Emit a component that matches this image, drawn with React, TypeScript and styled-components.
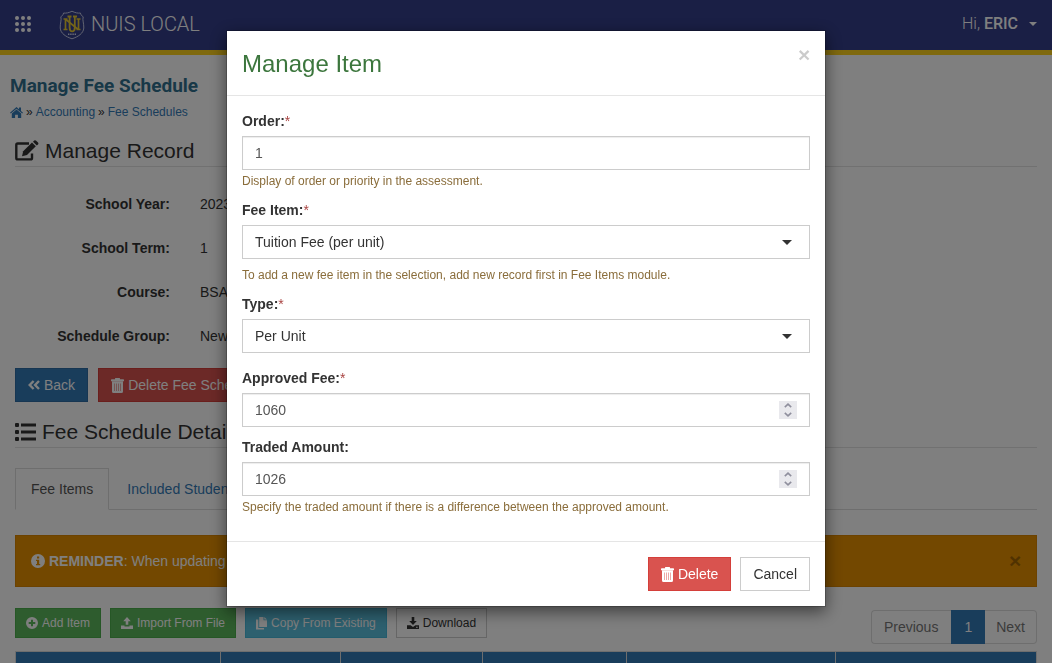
import React from "react";
import styled, { createGlobalStyle, css } from "styled-components";

const GlobalStyle = createGlobalStyle`
  *, *::before, *::after { box-sizing: border-box; }
  body {
    margin: 0;
    overflow: hidden;
    background: #fff;
    color: #333;
    font-family: "Liberation Sans", Arial, sans-serif;
    font-size: 14px;
    line-height: 20px;
  }
  button, input, select { font-family: inherit; }
  h1, h2, h3, p, ul, dl, dd { margin: 0; padding: 0; }
  a { color: #337ab7; text-decoration: none; }
  svg { display: block; flex: none; }
`;

/* ---------- icons ---------- */

type IconProps = { size?: number };

const GridIcon = () => (
  <svg width="16" height="16" viewBox="0 0 16 16" fill="currentColor" aria-hidden="true">
    {[2, 8, 14].map((y) => [2, 8, 14].map((x) => <circle key={`${x}-${y}`} cx={x} cy={y} r="2" />))}
  </svg>
);

const Crest = () => (
  <svg width="26" height="32" viewBox="0 -2 26 32" fill="none" aria-hidden="true">
    <path
      d="M13 1.200 C10 2.800 7 3.400 4.600 3 C4.200 4.800 3.200 6 1.800 6.800 C2.800 10 1 13.500 1.200 18 C1.600 23.500 7 26.800 13 28.800 C19 26.800 24.400 23.500 24.800 18 C25 13.500 23.200 10 24.200 6.800 C22.800 6 21.800 4.800 21.400 3 C19 3.400 16 2.800 13 1.200Z"
      stroke="#c5c9e4"
      strokeWidth="1"
    />
    <path d="M4.500 9h4M4.500 19.500h4M6.500 9v10.500M7 9.500L18.500 19M17.500 9h4M19.500 9v10.500M17.500 19.500h4" stroke="#e6c832" strokeWidth="1.700" />
    <path d="M8.500 6.500h4M14 6.500h4M10.600 6.500v11q0 3.800 2.600 3.800t2.600-3.800v-11" stroke="#e6c832" strokeWidth="1.800" />
    <path d="M9 24.300h8" stroke="#d5d8ee" strokeWidth="1.400" strokeDasharray="1.400 0.800" />
  </svg>
);

const HomeIcon = () => (
  <svg width="13" height="11" viewBox="0 0 13 11" fill="currentColor" aria-hidden="true">
    <path d="M6.500 0L9 2.200V.6h2v3.300l2 1.800-.8.9L6.500 1.700.8 6.600 0 5.700z" />
    <path d="M6.500 2.400L11.200 6.400V11H7.900V7.700H5.100V11H1.800V6.400z" />
  </svg>
);

const EditIcon = () => (
  <svg width="24" height="21" viewBox="0 0 24 21" aria-hidden="true">
    <path d="M14 3.500H2.700Q1.300 3.500 1.300 4.900V18Q1.300 19.400 2.700 19.400H15.600Q17 19.400 17 18V13.500" fill="none" stroke="currentColor" strokeWidth="2.400" />
    <path d="M7 16.200L8.200 11.200 17 2.600 20.800 6.300 12 15z" fill="currentColor" />
    <path d="M18 1.700L19.200.6Q20.200-.2 21.200.7L23 2.500Q23.800 3.500 23 4.400L21.800 5.400z" fill="currentColor" />
  </svg>
);

const ListIcon = () => (
  <svg width="21" height="18" viewBox="0 0 21 18" fill="currentColor" aria-hidden="true">
    {[0, 7, 14].map((y) => (
      <g key={y}>
        <rect x="0" y={y} width="4" height="4" rx="1" />
        <rect x="6" y={y + 0.5} width="15" height="3" />
      </g>
    ))}
  </svg>
);

const BackIcon = () => (
  <svg width="12" height="10" viewBox="0 0 12 10" fill="none" stroke="currentColor" strokeWidth="2.400" aria-hidden="true">
    <path d="M5.600 1L1.700 5l3.900 4M11 1L7.100 5 11 9" />
  </svg>
);

const TrashIcon = () => (
  <svg width="13" height="15" viewBox="0 0 13 15" aria-hidden="true">
    <path d="M4 1.300V.6Q4 0 4.600 0H8.400Q9 0 9 .6V1.300H12.300Q13 1.300 13 2V3.300H0V2Q0 1.300.7 1.300z" fill="currentColor" />
    <path
      fillRule="evenodd"
      d="M1 3.300H12V13.500Q12 15 10.500 15H2.500Q1 15 1 13.500zM3.400 5.500V13H3.900V5.500zM5.400 5.500V13H5.900V5.500zM7.300 5.500V13H7.800V5.500zM9.200 5.500V13H9.700V5.500z"
      fill="currentColor"
    />
  </svg>
);

const InfoIcon = () => (
  <svg width="14" height="14" viewBox="0 0 14 14" aria-hidden="true">
    <path
      fillRule="evenodd"
      fill="currentColor"
      d="M7 0a7 7 0 1 1 0 14A7 7 0 0 1 7 0zM6 2.500V4.500H8.200V2.500zM5 5.700V7H6V10H5V11.300H9.200V10H8.200V5.700z"
    />
  </svg>
);

const PlusIcon = () => (
  <svg width="12" height="12" viewBox="0 0 12 12" aria-hidden="true">
    <path
      fillRule="evenodd"
      fill="currentColor"
      d="M6 0a6 6 0 1 1 0 12A6 6 0 0 1 6 0zM5 2.700V5H2.700V7H5V9.300H7V7H9.300V5H7V2.700z"
    />
  </svg>
);

const UploadIcon = () => (
  <svg width="12" height="12" viewBox="0 0 12 12" fill="currentColor" aria-hidden="true">
    <path d="M6 0L9.800 4.200H7.300V7.800H4.700V4.200H2.200z" />
    <path d="M0 8.500H3.500V9.500H8.500V8.500H12V12H0z" />
  </svg>
);

const DownloadIcon = () => (
  <svg width="12" height="12" viewBox="0 0 12 12" aria-hidden="true">
    <path d="M4.700 0H7.300V4H9.800L6 8 2.200 4H4.700z" fill="currentColor" />
    <path fillRule="evenodd" d="M0 8.200H3.600L6 10 8.400 8.200H12V12H0zM9 9.700V10.700H10.700V9.700z" fill="currentColor" />
  </svg>
);

const CopyIcon = () => (
  <svg width="11" height="13" viewBox="0 0 11 13" fill="currentColor" aria-hidden="true">
    <path d="M3.200 0H7.500V3.300H11V10H3.200z" />
    <path d="M8.300 0L11 2.600H8.300z" />
    <path d="M0 2.500H2.300V11H8V12.500H0z" />
  </svg>
);

const Caret = ({ size = 8 }: IconProps) => (
  <svg width={size} height={size / 2} viewBox="0 0 8 4" fill="currentColor" aria-hidden="true">
    <path d="M0 0H8L4 4z" />
  </svg>
);

const Chevron = ({ up }: { up?: boolean }) => (
  <svg width="8" height="5" viewBox="0 0 8 5" fill="none" stroke="#8f8f9d" strokeWidth="1.600" aria-hidden="true">
    <path d={up ? "M.8 4.200L4 1.200 7.200 4.200" : "M.8 .8L4 3.800 7.200 .8"} />
  </svg>
);

/* ---------- page ---------- */

const TopBar = styled.header`
  display: flex;
  align-items: center;
  height: 55px;
  padding: 0 15px 3px;
  border-bottom: 5px solid #ffd21c;
  background: #343e8a;
  color: #fff;
  font-family: Roboto, sans-serif;
`;

const IconButton = styled.button`
  padding: 0;
  border: 0;
  background: none;
  color: inherit;
`;

const Brand = styled.a`
  display: flex;
  align-items: center;
  gap: 6px;
  margin-left: 28px;
  color: #fff;
  font-size: 20px;
  font-weight: 300;
`;

const UserMenu = styled.button`
  display: flex;
  align-items: center;
  gap: 11px;
  margin-left: auto;
  padding: 0;
  border: 0;
  background: none;
  color: #fff;
  font-size: 16px;
  font-weight: 300;
  b { font-weight: 500; }
`;

const PageHeader = styled.div`
  padding: 21px 10px 0;
`;

const PageTitle = styled.h1`
  color: #31708f;
  font-family: Roboto, sans-serif;
  font-size: 19px;
  font-weight: 700;
  line-height: 20px;
`;

const Breadcrumb = styled.nav`
  display: flex;
  align-items: center;
  gap: 3px;
  margin-top: 6px;
  font-size: 12px;
`;

const Main = styled.main`
  padding: 0 15px;
`;

const SectionTitle = styled.h2`
  display: flex;
  align-items: center;
  gap: 6px;
  height: 31px;
  margin-top: 14px;
  padding-bottom: 1px;
  border-bottom: 1px solid #e2e2e2;
  font-size: 21px;
  font-weight: 400;
  & ~ & { margin-top: 15px; }
`;

const Record = styled.dl`
  display: grid;
  grid-template-columns: 155px 1fr;
  gap: 24px 30px;
  padding: 27px 0 22px;
`;

const Term = styled.dt`
  font-weight: 700;
  text-align: right;
`;

const ButtonRow = styled.div<{ $gap: number }>`
  display: flex;
  gap: ${(p) => p.$gap}px;
`;

const tones = {
  primary: css`background: #337ab7; border-color: #2e6da4; color: #fff;`,
  danger: css`background: #d9534f; border-color: #d43f3a; color: #fff;`,
  success: css`background: #5cb85c; border-color: #4cae4c; color: #fff;`,
  info: css`background: #5bc0de; border-color: #46b8da; color: #fff;`,
  plain: css`background: #fff; border-color: #ccc; color: #333;`,
};

const Button = styled.button<{ $tone: keyof typeof tones; $small?: boolean }>`
  display: inline-flex;
  align-items: center;
  gap: 4px;
  height: ${(p) => (p.$small ? 30 : 34)}px;
  padding: 0 ${(p) => (p.$small ? 10 : 12)}px;
  border: 1px solid;
  font-size: ${(p) => (p.$small ? 12 : 14)}px;
  white-space: nowrap;
  ${(p) => tones[p.$tone]}
`;

const Tabs = styled.nav`
  display: flex;
  margin-top: 20px;
  border-bottom: 1px solid #ddd;
`;

const Tab = styled.a<{ $active?: boolean }>`
  margin-bottom: -1px;
  padding: 10px 15px;
  border: 1px solid ${(p) => (p.$active ? "#ddd" : "transparent")};
  border-bottom-color: ${(p) => (p.$active ? "#fff" : "transparent")};
  margin-right: 2px;
  color: ${(p) => (p.$active ? "#555" : "#337ab7")};
`;

const Notice = styled.div`
  display: flex;
  align-items: center;
  gap: 4px;
  margin-top: 25px;
  padding: 15px;
  border: 1px solid #d88400;
  background: #e79000;
  color: #fff;
`;

const CloseButton = styled.button`
  width: 12px;
  margin-left: auto;
  padding: 0;
  border: 0;
  background: none;
  color: #000;
  font-size: 21px;
  font-weight: 700;
  line-height: 16px;
  opacity: 0.2;
`;

const NoticeClose = styled(CloseButton)`
  opacity: 0.3;
`;

const Toolbar = styled.div`
  display: flex;
  justify-content: space-between;
  margin-top: 21px;
`;

const Pagination = styled.nav`
  display: flex;
  margin: 2px 0 7px;
`;

const PageLink = styled.a<{ $active?: boolean }>`
  padding: 6px 12px;
  border: 1px solid ${(p) => (p.$active ? "#337ab7" : "#ddd")};
  background: ${(p) => (p.$active ? "#337ab7" : "#fff")};
  color: ${(p) => (p.$active ? "#fff" : "#777")};
  &:first-child { padding-right: 13px; border-radius: 4px 0 0 4px; border-right: 0; }
  &:last-child { padding: 6px 11px; border-radius: 0 4px 4px 0; border-left: 0; }
`;

const FeeTable = styled.table`
  width: 100%;
  table-layout: fixed;
  border-collapse: collapse;
`;

const HeadCell = styled.th<{ $width?: string }>`
  width: ${(p) => p.$width ?? "auto"};
  height: 40px;
  border: 1px solid #ddd;
  background: #337ab7;
`;

/* ---------- dialog ---------- */

const Backdrop = styled.div`
  position: fixed;
  inset: 0;
  padding: 30px 0;
  background: rgba(0, 0, 0, 0.5);
`;

const Dialog = styled.div`
  width: 100%;
  max-width: 600px;
  margin: 0 auto;
  border: 1px solid rgba(0, 0, 0, 0.2);
  background: #fff;
  background-clip: padding-box;
  box-shadow: 0 5px 15px rgba(0, 0, 0, 0.5);
`;

const DialogHeader = styled.div`
  display: flex;
  align-items: flex-start;
  padding: 16px 15px 14px;
  border-bottom: 1px solid #e5e5e5;
`;

const DialogTitle = styled.h3`
  color: #3c763d;
  font-size: 24px;
  font-weight: 400;
  line-height: 34px;
`;

const DialogBody = styled.form`
  padding: 15px;
`;

const DialogFooter = styled.div`
  display: flex;
  justify-content: flex-end;
  gap: 9px;
  padding: 15px;
  border-top: 1px solid #e5e5e5;
`;

const Field = styled.div`
  margin-bottom: 10px;
`;

const Label = styled.label`
  display: block;
  margin-bottom: 5px;
  font-weight: 700;
`;

const Required = styled.span`
  color: #a94442;
  font-weight: 400;
`;

const Help = styled.p`
  padding-top: 2px;
  color: #8a6d3b;
  font-size: 12px;
  line-height: 18px;
`;

const ControlBox = styled.div`
  display: flex;
  align-items: center;
  height: 34px;
  padding-right: 12px;
  border: 1px solid #ccc;
  box-shadow: inset 0 1px 1px rgba(0, 0, 0, 0.075);
`;

const Input = styled.input`
  flex: 1;
  min-width: 0;
  height: 32px;
  padding: 0 12px;
  border: 0;
  outline: 0;
  background: none;
  color: #555;
  font-size: 14px;
  appearance: textfield;
  &::-webkit-inner-spin-button { appearance: none; margin: 0; }
`;

const Stepper = styled.div`
  display: flex;
  flex-direction: column;
  width: 18px;
  background: #e9e9ed;
`;

const StepButton = styled.button`
  display: flex;
  align-items: center;
  justify-content: center;
  height: 9px;
  padding: 0;
  border: 0;
  background: none;
`;

const SelectBox = styled.div`
  display: grid;
  align-items: center;
  padding-bottom: 5px;
  > * { grid-area: 1 / 1; }
  > svg { justify-self: end; margin-right: 18px; pointer-events: none; }
`;

const Select = styled.select`
  width: 100%;
  height: 34px;
  padding: 0 36px 0 12px;
  border: 1px solid #ccc;
  border-radius: 0;
  outline: 0;
  background: #fff;
  color: #333;
  font-size: 14px;
  appearance: none;
`;

type FieldProps = { id: string; label: string; value: string; required?: boolean; help?: string };

const FieldLabel = ({ id, label, required }: Pick<FieldProps, "id" | "label" | "required">) => (
  <Label htmlFor={id}>
    {label}:{required && <Required>*</Required>}
  </Label>
);

const InputField = ({ id, label, value, required, help, stepper }: FieldProps & { stepper?: boolean }) => (
  <Field>
    <FieldLabel id={id} label={label} required={required} />
    <ControlBox>
      <Input id={id} type={stepper ? "number" : "text"} defaultValue={value} />
      {stepper && (
        <Stepper>
          <StepButton type="button" aria-label={`Increase ${label}`}><Chevron up /></StepButton>
          <StepButton type="button" aria-label={`Decrease ${label}`}><Chevron /></StepButton>
        </Stepper>
      )}
    </ControlBox>
    {help && <Help>{help}</Help>}
  </Field>
);

const SelectField = ({ id, label, value, required, help }: FieldProps) => (
  <Field>
    <FieldLabel id={id} label={label} required={required} />
    <SelectBox>
      <Select id={id} defaultValue={value}>
        <option>{value}</option>
      </Select>
      <Caret size={10} />
    </SelectBox>
    {help && <Help>{help}</Help>}
  </Field>
);

const record = [
  ["School Year", "2023"],
  ["School Term", "1"],
  ["Course", "BSA"],
  ["Schedule Group", "New"],
];

const columnWidths = ["20.1%", "11.7%", "13.9%", "14.1%", "20.5%", undefined];

export default function App() {
  return (
    <>
      <GlobalStyle />
      <TopBar>
        <IconButton aria-label="Apps"><GridIcon /></IconButton>
        <Brand href="#"><Crest />NUIS LOCAL</Brand>
        <UserMenu>
          <span>Hi, <b>ERIC</b></span>
          <Caret />
        </UserMenu>
      </TopBar>

      <PageHeader>
        <PageTitle>Manage Fee Schedule</PageTitle>
        <Breadcrumb>
          <a href="#" aria-label="Home"><HomeIcon /></a>
          <span>»</span>
          <a href="#">Accounting</a>
          <span>»</span>
          <a href="#">Fee Schedules</a>
        </Breadcrumb>
      </PageHeader>

      <Main>
        <SectionTitle><EditIcon />Manage Record</SectionTitle>
        <Record>
          {record.map(([term, value]) => (
            <React.Fragment key={term}>
              <Term>{term}:</Term>
              <dd>{value}</dd>
            </React.Fragment>
          ))}
        </Record>
        <ButtonRow $gap={10}>
          <Button $tone="primary"><BackIcon />Back</Button>
          <Button $tone="danger"><TrashIcon />Delete Fee Schedule</Button>
        </ButtonRow>
        <SectionTitle><ListIcon />Fee Schedule Details</SectionTitle>
        <Tabs>
          <Tab href="#" $active>Fee Items</Tab>
          <Tab href="#">Included Students</Tab>
        </Tabs>
        <Notice>
          <InfoIcon />
          <span><b>REMINDER</b>: When updating</span>
          <NoticeClose aria-label="Dismiss">×</NoticeClose>
        </Notice>
        <Toolbar>
          <ButtonRow $gap={9}>
            <Button $tone="success" $small><PlusIcon />Add Item</Button>
            <Button $tone="success" $small><UploadIcon />Import From File</Button>
            <Button $tone="info" $small><CopyIcon />Copy From Existing</Button>
            <Button $tone="plain" $small><DownloadIcon />Download</Button>
          </ButtonRow>
          <Pagination>
            <PageLink href="#">Previous</PageLink>
            <PageLink href="#" $active>1</PageLink>
            <PageLink href="#">Next</PageLink>
          </Pagination>
        </Toolbar>
        <FeeTable>
          <thead>
            <tr>
              {columnWidths.map((width, i) => <HeadCell key={i} $width={width} />)}
            </tr>
          </thead>
        </FeeTable>
      </Main>

      <Backdrop>
        <Dialog role="dialog" aria-modal="true" aria-labelledby="dialog-title">
          <DialogHeader>
            <DialogTitle id="dialog-title">Manage Item</DialogTitle>
            <CloseButton aria-label="Close">×</CloseButton>
          </DialogHeader>
          <DialogBody>
            <InputField id="order" label="Order" value="1" required help="Display of order or priority in the assessment." />
            <SelectField id="fee-item" label="Fee Item" value="Tuition Fee (per unit)" required help="To add a new fee item in the selection, add new record first in Fee Items module." />
            <SelectField id="type" label="Type" value="Per Unit" required />
            <InputField id="approved" label="Approved Fee" value="1060" required stepper />
            <InputField id="traded" label="Traded Amount" value="1026" stepper help="Specify the traded amount if there is a difference between the approved amount." />
          </DialogBody>
          <DialogFooter>
            <Button $tone="danger"><TrashIcon />Delete</Button>
            <Button $tone="plain">Cancel</Button>
          </DialogFooter>
        </Dialog>
      </Backdrop>
    </>
  );
}
